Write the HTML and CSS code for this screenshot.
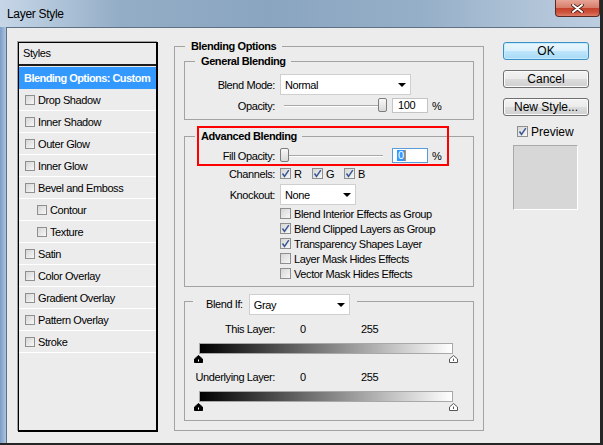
FILE: index.html
```html
<!DOCTYPE html>
<html lang="en">
<head>
    <meta charset="UTF-8">
    <title>Layer Style</title>
    <link rel="stylesheet" href="styles.css">
</head>
<body>
    <div class="window">
        <!-- Title bar -->
        <div class="titlebar">
            <span class="title">Layer Style</span>
            <div class="close">
                <svg width="13" height="9" viewBox="0 0 13 9">
                    <path d="M2 1 L11 8 M11 1 L2 8" stroke="#4b1d14" stroke-width="3.6" stroke-linecap="round"/>
                    <path d="M2 1 L11 8 M11 1 L2 8" stroke="#fff" stroke-width="2" stroke-linecap="round"/>
                </svg>
            </div>
        </div>

        <div class="client">
            <!-- Styles list -->
            <div class="styles-list">
                <div class="list-head">Styles</div>
                <div class="list-item active">Blending Options: Custom</div>
                <div class="list-item"><span class="cb small"></span>Drop Shadow</div>
                <div class="list-item"><span class="cb small"></span>Inner Shadow</div>
                <div class="list-item"><span class="cb small"></span>Outer Glow</div>
                <div class="list-item"><span class="cb small"></span>Inner Glow</div>
                <div class="list-item"><span class="cb small"></span>Bevel and Emboss</div>
                <div class="list-item sub"><span class="cb small"></span>Contour</div>
                <div class="list-item sub"><span class="cb small"></span>Texture</div>
                <div class="list-item"><span class="cb small"></span>Satin</div>
                <div class="list-item"><span class="cb small"></span>Color Overlay</div>
                <div class="list-item"><span class="cb small"></span>Gradient Overlay</div>
                <div class="list-item"><span class="cb small"></span>Pattern Overlay</div>
                <div class="list-item"><span class="cb small"></span>Stroke</div>
            </div>

            <!-- Blending options -->
            <fieldset class="group outer">
                <legend>Blending Options</legend>

                <fieldset class="group sub-group">
                    <legend>General Blending</legend>
                    <div class="row">
                        <span class="lbl">Blend Mode:</span>
                        <div class="select w-mode">Normal<span class="arrow"></span></div>
                    </div>
                    <div class="row gap">
                        <span class="lbl">Opacity:</span>
                        <div class="slider"><div class="track"></div><div class="thumb" style="left: 98px"></div></div>
                        <div class="num">100</div>
                        <span class="pct">%</span>
                    </div>
                </fieldset>

                <fieldset class="group sub-group advanced">
                    <legend>Advanced Blending</legend>
                    <div class="row">
                        <span class="lbl">Fill Opacity:</span>
                        <div class="slider"><div class="track"></div><div class="thumb" style="left: 0px"></div></div>
                        <div class="num focus"><span class="selected">0</span></div>
                        <span class="pct">%</span>
                    </div>
                    <div class="row gap">
                        <span class="lbl">Channels:</span>
                        <div class="chan"><span class="cb"><svg width="9" height="9" viewBox="0 0 9 9"><path d="M1.5 4.5 L3.5 7.5 L7.8 1.2" fill="none" stroke="#3b5893" stroke-width="1.5"/></svg></span>R</div>
                        <div class="chan"><span class="cb"><svg width="9" height="9" viewBox="0 0 9 9"><path d="M1.5 4.5 L3.5 7.5 L7.8 1.2" fill="none" stroke="#3b5893" stroke-width="1.5"/></svg></span>G</div>
                        <div class="chan"><span class="cb"><svg width="9" height="9" viewBox="0 0 9 9"><path d="M1.5 4.5 L3.5 7.5 L7.8 1.2" fill="none" stroke="#3b5893" stroke-width="1.5"/></svg></span>B</div>
                    </div>
                    <div class="row gap">
                        <span class="lbl">Knockout:</span>
                        <div class="select w-knock">None<span class="arrow"></span></div>
                    </div>
                    <div class="checks">
                        <div class="check"><span class="cb"></span>Blend Interior Effects as Group</div>
                        <div class="check"><span class="cb"><svg width="9" height="9" viewBox="0 0 9 9"><path d="M1.5 4.5 L3.5 7.5 L7.8 1.2" fill="none" stroke="#3b5893" stroke-width="1.5"/></svg></span>Blend Clipped Layers as Group</div>
                        <div class="check"><span class="cb"><svg width="9" height="9" viewBox="0 0 9 9"><path d="M1.5 4.5 L3.5 7.5 L7.8 1.2" fill="none" stroke="#3b5893" stroke-width="1.5"/></svg></span>Transparency Shapes Layer</div>
                        <div class="check"><span class="cb"></span>Layer Mask Hides Effects</div>
                        <div class="check"><span class="cb"></span>Vector Mask Hides Effects</div>
                    </div>
                </fieldset>

                <fieldset class="group sub-group blend-if">
                    <legend>
                        <span>Blend If:</span>
                        <div class="select w-gray">Gray<span class="arrow"></span></div>
                    </legend>
                    <div class="level-row">
                        <span class="lbl">This Layer:</span>
                        <span class="v0">0</span><span>255</span>
                    </div>
                    <div class="grad"></div>
                    <div class="handles">
                        <svg width="9" height="8" viewBox="0 0 9 8"><path d="M4.5 0.5 L8.5 4 L8.5 7.5 L0.5 7.5 L0.5 4 Z" fill="#000" stroke="#000"/><path d="M4.5 4.5 V6.5" stroke="#fff"/></svg>
                        <svg width="9" height="8" viewBox="0 0 9 8"><path d="M4.5 0.5 L8.5 4 L8.5 7.5 L0.5 7.5 L0.5 4 Z" fill="#fff" stroke="#555"/><path d="M4.5 3.5 V6" stroke="#555"/></svg>
                    </div>
                    <div class="level-row">
                        <span class="lbl">Underlying Layer:</span>
                        <span class="v0">0</span><span>255</span>
                    </div>
                    <div class="grad"></div>
                    <div class="handles">
                        <svg width="9" height="8" viewBox="0 0 9 8"><path d="M4.5 0.5 L8.5 4 L8.5 7.5 L0.5 7.5 L0.5 4 Z" fill="#000" stroke="#000"/><path d="M4.5 4.5 V6.5" stroke="#fff"/></svg>
                        <svg width="9" height="8" viewBox="0 0 9 8"><path d="M4.5 0.5 L8.5 4 L8.5 7.5 L0.5 7.5 L0.5 4 Z" fill="#fff" stroke="#555"/><path d="M4.5 3.5 V6" stroke="#555"/></svg>
                    </div>
                </fieldset>
            </fieldset>

            <!-- Buttons -->
            <div class="buttons">
                <div class="btn default">OK</div>
                <div class="btn">Cancel</div>
                <div class="btn">New Style...</div>
                <div class="preview-row">
                    <span class="cb"><svg width="9" height="9" viewBox="0 0 9 9"><path d="M1.5 4.5 L3.5 7.5 L7.8 1.2" fill="none" stroke="#3b5893" stroke-width="1.5"/></svg></span>Preview
                </div>
                <div class="swatch"></div>
            </div>
        </div>

        <!-- red annotation box -->
        <div class="highlight"></div>
    </div>
</body>
</html>
```

FILE: styles.css
```css
body {
    margin: 0;
    font-family: "Liberation Sans", Arial, sans-serif;
    font-size: 11px;
    letter-spacing: -0.4px;
    color: #000;
}

.window {
    position: relative;
    width: 603px;
    height: 445px;
    box-sizing: border-box;
    border-right: 3px solid #262626;
    border-bottom: 2px solid #262626;
    background:
        linear-gradient(to right, #7b9dc7, #adc4de) 0 27px / 6px 100% no-repeat,
        linear-gradient(to right, #c6d6e7 0%, #b3c7db 8%, #93adc6 20%, #8aa5c0 45%, #95afc8 70%, #b2c5d8 90%, #bccde0 100%);
}

.titlebar {
    height: 27px;
    display: flex;
    justify-content: space-between;
    align-items: flex-start;
}
.title {
    font-size: 12px;
    letter-spacing: -0.3px;
    line-height: 14px;
    padding: 7px 0 0 7px;
}
.close {
    width: 45px;
    height: 17px;
    box-sizing: border-box;
    border: 1px solid #5a2a22;
    border-top: none;
    border-radius: 0 0 4px 4px;
    background: linear-gradient(#e7a596 0%, #d77e6b 48%, #c4412a 52%, #cf563f 80%, #de7e68 100%);
    display: flex;
    align-items: center;
    justify-content: center;
}

.client {
    margin-left: 6px;
    height: 416px;
    box-sizing: border-box;
    border-top: 1px solid #5f7185;
    border-left: 1px solid #5f7185;
    background: #ececec;
    display: flex;
    align-items: flex-start;
    padding: 12px 0 0 11px;
}

/* styles list */
.styles-list {
    width: 140px;
    height: 390px;
    margin-top: 2px;
    box-sizing: border-box;
    border: solid #000;
    border-width: 1px 2px 2px 1px;
    box-shadow: -1px -1px 0 #a0a0a0;
}
.list-head {
    height: 21px;
    line-height: 21px;
    padding-left: 4px;
    border-bottom: 2px solid #1c1c1c;
    margin-bottom: 1px;
}
.list-item {
    height: 21px;
    border-bottom: 1px solid #fff;
    display: flex;
    align-items: center;
    gap: 3px;
    padding-left: 6px;
}
.list-item.active {
    height: 22px;
    border-bottom: none;
    background: #3399ff;
    color: #fff;
    font-weight: bold;
    letter-spacing: -0.55px;
    padding-left: 5px;
}
.list-item.sub {
    padding-left: 18px;
}

/* checkboxes */
.cb {
    width: 11px;
    height: 11px;
    box-sizing: border-box;
    border: 1px solid #8e8f8f;
    background: linear-gradient(135deg, #d6d6d6, #f7f7f7);
    flex-shrink: 0;
    display: flex;
    align-items: center;
    justify-content: center;
}
.cb.small {
    width: 10px;
    height: 10px;
}

/* group boxes */
.group {
    margin: 0;
    padding: 0;
    min-width: 0;
    border: 1px solid #a3a3a3;
}
.group > legend {
    font-weight: bold;
    line-height: 13px;
    padding: 0 5px 0 6px;
    margin-left: 10px;
}
.outer {
    width: 310px;
    box-sizing: border-box;
    margin-left: 16px;
    padding: 2px 9px 9px;
}
.outer > legend {
    margin-left: 1px;
    padding: 0 6px;
}
.sub-group {
    padding: 6px 0 6px;
}
.advanced {
    margin-top: 10px;
    padding: 5px 0 5px;
}

.row {
    display: flex;
    align-items: center;
    min-height: 15px;
}
.row.gap {
    margin-top: 3px;
}
.lbl {
    width: 90px;
    margin-right: 5px;
    text-align: right;
    flex-shrink: 0;
}

.select {
    height: 21px;
    box-sizing: border-box;
    border: 1px solid #cfcfcf;
    background: #fff;
    display: flex;
    align-items: center;
    justify-content: space-between;
    padding: 1px 4px 0 4px;
}
.arrow {
    width: 0;
    height: 0;
    border-left: 4px solid transparent;
    border-right: 4px solid transparent;
    border-top: 4px solid #000;
}
.w-mode { width: 131px; }
.w-knock { width: 76px; }
.w-gray { width: 101px; margin-left: 6px; }

.slider {
    position: relative;
    width: 107px;
    height: 15px;
}
.slider .track {
    position: absolute;
    left: 4px;
    right: 4px;
    top: 7px;
    height: 1px;
    background: #a9a9a9;
    border-bottom: 1px solid #fff;
}
.slider .thumb {
    position: absolute;
    top: 0;
    width: 9px;
    height: 14px;
    box-sizing: border-box;
    border: 1px solid #7d7d7d;
    border-radius: 2px;
    background: linear-gradient(#f8f8f8, #d9d9d9);
}
.num {
    width: 36px;
    height: 15px;
    box-sizing: border-box;
    margin-left: 5px;
    padding-left: 5px;
    border: 1px solid #c4c4c4;
    background: #fff;
    line-height: 13px;
}
.num.focus {
    border-color: #5b9bd8;
    padding-left: 4px;
}
.num .selected {
    display: inline-block;
    background: #3399ff;
    color: #fff;
    padding: 0 1px;
    line-height: 11px;
    margin-top: 1px;
    border-right: 1px solid #e58a1c;
}
.pct {
    margin-left: 4px;
}

.chan {
    display: flex;
    align-items: center;
    gap: 3px;
    width: 32px;
}
.checks {
    margin-top: 1px;
}
.check {
    height: 15px;
    display: flex;
    align-items: center;
    gap: 3px;
    margin-left: 95px;
}

/* blend if */
.blend-if {
    padding: 0 0 9px;
}
.blend-if > legend {
    display: flex;
    align-items: center;
    font-weight: normal;
    padding: 7px 7px 0 13px;
    margin-left: 8px;
}
.level-row {
    display: flex;
    margin-top: 8px;
    line-height: 13px;
}
.v0 {
    margin-left: 20px;
    width: 61px;
}
.grad {
    margin: 7px 0 0 14px;
    width: 254px;
    height: 11px;
    box-sizing: border-box;
    border: 1px solid #a8a8a8;
    background: linear-gradient(to right, #000, #fff);
}
.handles {
    margin: 1px 0 0 9px;
    width: 264px;
    height: 8px;
    display: flex;
    justify-content: space-between;
}
.handles svg {
    display: block;
}

/* buttons */
.buttons {
    width: 86px;
    margin: 2px 0 0 19px;
    display: flex;
    flex-direction: column;
}
.btn {
    height: 18px;
    box-sizing: border-box;
    margin-bottom: 10px;
    border: 1px solid #707070;
    border-radius: 3px;
    background: linear-gradient(#f3f3f3 0%, #ebebeb 50%, #dddddd 50%, #cfcfcf 100%);
    box-shadow: inset 0 0 0 1px #fbfbfb;
    font-size: 12px;
    letter-spacing: 0;
    line-height: 16px;
    text-align: center;
}
.btn.default {
    border-color: #3c8fc6;
    background: linear-gradient(#eaf6fd 0%, #d9f0fc 50%, #bee6fd 50%, #a7d9f5 100%);
    box-shadow: inset 0 0 0 1px #c5ecfc;
}
.preview-row {
    display: flex;
    align-items: center;
    gap: 3px;
    height: 11px;
    margin-left: 14px;
    font-size: 12px;
    letter-spacing: 0;
}
.swatch {
    width: 65px;
    height: 65px;
    box-sizing: border-box;
    margin: 8px 0 0 10px;
    background: #d7d7d7;
    border: 1px solid;
    border-color: #a9a9a9 #fff #fff #a9a9a9;
}

.highlight {
    position: absolute;
    left: 197px;
    top: 126px;
    width: 252px;
    height: 40px;
    box-sizing: border-box;
    border: 2px solid #f00;
}
```
